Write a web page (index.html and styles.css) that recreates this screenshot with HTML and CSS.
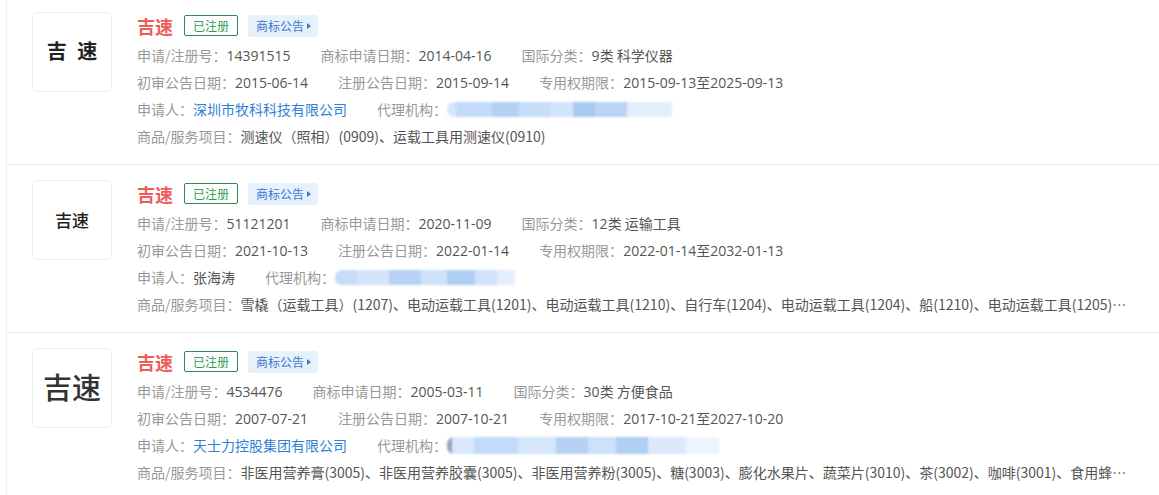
FILE: index.html
```html
<!DOCTYPE html>
<html lang="zh-CN">
<head>
<meta charset="utf-8">
<title>商标列表</title>
<link rel="stylesheet" href="styles.css">
</head>
<body>
<div class="list">
  <div class="item">
    <div class="logo logo-a">吉 速</div>
    <div class="info">
      <div class="head">
        <span class="name">吉速</span>
        <span class="tag-reg">已注册</span>
        <span class="tag-notice">商标公告<span class="tri"></span></span>
      </div>
      <div class="line"><span class="f"><span class="k">申请/注册号：</span><span class="v n">14391515</span></span><span class="f"><span class="k">商标申请日期：</span><span class="v n">2014-04-16</span></span><span class="f"><span class="k">国际分类：</span><span class="v"><span class="n">9</span>类 科学仪器</span></span></div>
      <div class="line"><span class="f"><span class="k">初审公告日期：</span><span class="v n">2015-06-14</span></span><span class="f"><span class="k">注册公告日期：</span><span class="v n">2015-09-14</span></span><span class="f"><span class="k">专用权期限：</span><span class="v"><span class="n">2015-09-13</span>至<span class="n">2025-09-13</span></span></span></div>
      <div class="line"><span class="f"><span class="k">申请人：</span><span class="link">深圳市牧科科技有限公司</span></span><span class="f"><span class="k">代理机构：</span><span class="blur blur-a"></span></span></div>
      <div class="line clip"><span class="k">商品/服务项目：</span><span class="v">测速仪（照相）(0909)、运载工具用测速仪(0910)</span></div>
    </div>
  </div>
  <div class="item">
    <div class="logo logo-b">吉速</div>
    <div class="info">
      <div class="head">
        <span class="name">吉速</span>
        <span class="tag-reg">已注册</span>
        <span class="tag-notice">商标公告<span class="tri"></span></span>
      </div>
      <div class="line"><span class="f"><span class="k">申请/注册号：</span><span class="v n">51121201</span></span><span class="f"><span class="k">商标申请日期：</span><span class="v n">2020-11-09</span></span><span class="f"><span class="k">国际分类：</span><span class="v"><span class="n">12</span>类 运输工具</span></span></div>
      <div class="line"><span class="f"><span class="k">初审公告日期：</span><span class="v n">2021-10-13</span></span><span class="f"><span class="k">注册公告日期：</span><span class="v n">2022-01-14</span></span><span class="f"><span class="k">专用权期限：</span><span class="v"><span class="n">2022-01-14</span>至<span class="n">2032-01-13</span></span></span></div>
      <div class="line"><span class="f"><span class="k">申请人：</span><span class="v">张海涛</span></span><span class="f"><span class="k">代理机构：</span><span class="blur blur-b"></span></span></div>
      <div class="line clip"><span class="k">商品/服务项目：</span><span class="v">雪橇（运载工具）(1207)、电动运载工具(1201)、电动运载工具(1210)、自行车(1204)、电动运载工具(1204)、船(1210)、电动运载工具(1205)、电动运载工具(1206)</span></div>
    </div>
  </div>
  <div class="item">
    <div class="logo logo-c">吉速</div>
    <div class="info">
      <div class="head">
        <span class="name">吉速</span>
        <span class="tag-reg">已注册</span>
        <span class="tag-notice">商标公告<span class="tri"></span></span>
      </div>
      <div class="line"><span class="f"><span class="k">申请/注册号：</span><span class="v n">4534476</span></span><span class="f"><span class="k">商标申请日期：</span><span class="v n">2005-03-11</span></span><span class="f"><span class="k">国际分类：</span><span class="v"><span class="n">30</span>类 方便食品</span></span></div>
      <div class="line"><span class="f"><span class="k">初审公告日期：</span><span class="v n">2007-07-21</span></span><span class="f"><span class="k">注册公告日期：</span><span class="v n">2007-10-21</span></span><span class="f"><span class="k">专用权期限：</span><span class="v"><span class="n">2017-10-21</span>至<span class="n">2027-10-20</span></span></span></div>
      <div class="line"><span class="f"><span class="k">申请人：</span><span class="link">天士力控股集团有限公司</span></span><span class="f"><span class="k">代理机构：</span><span class="blur blur-c"></span></span></div>
      <div class="line clip"><span class="k">商品/服务项目：</span><span class="v">非医用营养膏(3005)、非医用营养胶囊(3005)、非医用营养粉(3005)、糖(3003)、膨化水果片、蔬菜片(3010)、茶(3002)、咖啡(3001)、食用蜂胶(3005)</span></div>
    </div>
  </div>
</div>
</body>
</html>
```

FILE: styles.css
```css
* { box-sizing: border-box; }
html, body { margin: 0; padding: 0; background: #fff; }
body {
  font-family: "Noto Sans CJK SC", "Microsoft YaHei", sans-serif;
  font-size: 14px;
  color: #555;
  overflow: hidden;
}
.list {
  margin: -3px 0 0 6px;
  border-left: 1px solid #eceef2;
  min-height: 520px;
}
.item {
  display: flex;
  gap: 25px;
  padding: 15px 20px 14px 24px;
  margin-left: 1px;
  border-bottom: 1px solid #ebebeb;
  height: 168px;
}
.logo {
  flex: none;
  width: 80px;
  height: 80px;
  border: 1px solid #eeeeee;
  border-radius: 5px;
  display: flex;
  align-items: center;
  justify-content: center;
  color: #222;
  line-height: 1;
}
.logo-a { font-size: 20px; font-weight: 700; letter-spacing: 3px; padding-left: 3px; padding-bottom: 2px; }
.logo-b { font-size: 17px; font-weight: 500; padding-bottom: 2px; }
.logo-c { font-size: 29px; font-weight: 500; color: #333; padding-bottom: 4px; }
.info { flex: 1; min-width: 0; }
.head {
  display: flex;
  align-items: center;
  height: 27px;
  margin-bottom: 3px;
}
.name {
  color: #f25b5b;
  font-size: 18px;
  font-weight: 700;
  margin-right: 11px;
  line-height: 1;
}
.tag-reg {
  display: inline-flex;
  align-items: center;
  height: 21px;
  padding: 0 8px;
  border: 1px solid #2b8a4e;
  border-radius: 2px;
  color: #2f9b57;
  font-size: 12px;
  margin-right: 10px;
}
.tag-notice {
  display: inline-flex;
  align-items: center;
  height: 22px;
  padding: 0 7px 0 8px;
  background: #e7f1fc;
  border-radius: 2px;
  color: #3778cf;
  font-size: 12px;
}
.tri {
  display: inline-block;
  width: 0;
  height: 0;
  margin-left: 3px;
  border-top: 3.5px solid transparent;
  border-bottom: 3.5px solid transparent;
  border-left: 4px solid #3778cf;
}
.line {
  height: 27px;
  line-height: 27px;
  white-space: nowrap;
  display: flex;
  align-items: center;
}
.clip {
  display: block;
  overflow: hidden;
  text-overflow: ellipsis;
  padding-right: 4px;
}
.f { display: inline-flex; align-items: center; margin-right: 30px; }
.k { color: #999; }
.v { color: #555; }
.n { font-family: "Open Sans", sans-serif; }
.link { color: #2f7fd8; }
.blur {
  display: inline-block;
  height: 15px;
  border-radius: 7px 0 0 7px;
  filter: blur(0.8px);
}
.blur-a {
  width: 225px;
  background: linear-gradient(90deg, #d7e7fb 0 4%, #c3dbf8 4% 20%, #b4d1f4 20% 32%, #c7ddf8 32% 46%, #d4e5fb 46% 56%, #a9c9f1 56% 66%, #bad4f5 66% 80%, #e3eefc 80% 100%);
}
.blur-b {
  width: 180px;
  background: linear-gradient(90deg, #c7dcf8 0 12%, #d4e5fb 12% 30%, #b7d2f5 30% 48%, #cfe2fa 48% 62%, #b0cdf3 62% 78%, #d1e3fa 78% 90%, #e4eefc 90% 100%);
}
.blur-c {
  width: 272px;
  height: 17px;
  background: linear-gradient(90deg, #9aa6b5 0 2%, #d9e8fb 2% 10%, #c3dbf8 10% 26%, #d6e6fb 26% 40%, #b5d1f4 40% 52%, #cde1fa 52% 62%, #b1cef3 62% 74%, #dbe9fb 74% 88%, #eef4fd 88% 100%);
}
```
